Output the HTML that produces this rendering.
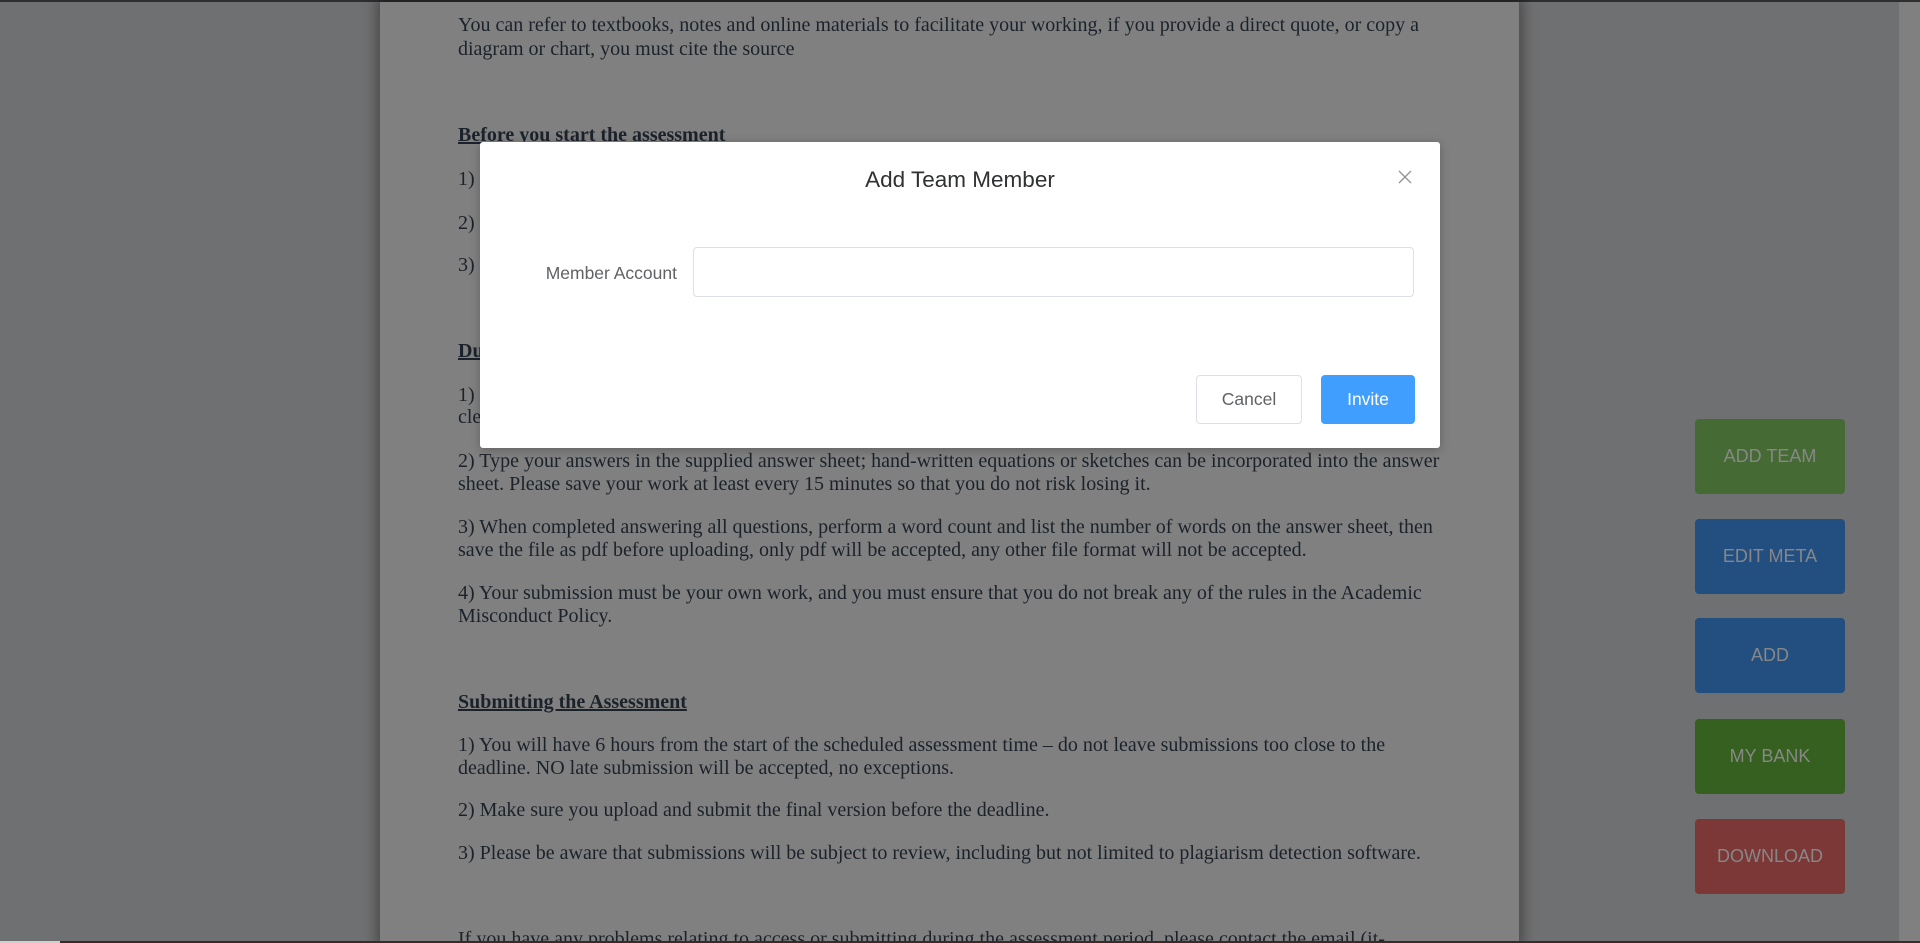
<!DOCTYPE html>
<html><head><meta charset="utf-8"><style>
*{margin:0;padding:0;box-sizing:border-box}
html,body{width:1920px;height:943px;overflow:hidden}
body{background:#6f7071;position:relative;font-family:"Liberation Serif",serif}
#top{position:absolute;left:0;top:0;width:1920px;height:2px;background:#2e2e2e}
#paper{position:absolute;left:380px;top:2px;width:1139px;height:941px;background:#808080;box-shadow:0 0 12px 4px rgba(0,0,0,.35)}
#track{position:absolute;left:1899px;top:2px;width:21px;height:941px;background:#808080}
.l{position:absolute;left:458px;font-size:20px;line-height:23px;color:#1b222a;white-space:nowrap;margin-top:2px}
.h{font-weight:bold;text-decoration:underline}
#bot{position:absolute;left:0;top:941px;width:1920px;height:2px;background:#3a2a2a}
#bot2{position:absolute;left:0;top:941px;width:60px;height:2px;background:#d0d0d0}
.btn{position:absolute;left:1695px;width:150px;height:75px;border-radius:4px;color:#878787;font:18px/75px "Liberation Sans",sans-serif;text-align:center}
#modal{position:absolute;left:480px;top:142px;width:960px;height:306px;background:#fff;border-radius:3px;box-shadow:0 2px 10px rgba(0,0,0,.25);font-family:"Liberation Sans",sans-serif}
</style></head><body>
<div id="top"></div>
<div id="paper"></div>
<div id="track"></div>
<div class="l" style="top:12px">You can refer to textbooks, notes and online materials to facilitate your working, if you provide a direct quote, or copy a</div>
<div class="l" style="top:36px">diagram or chart, you must cite the source</div>
<div class="l h" style="top:122px">Before you start the assessment</div>
<div class="l" style="top:166px">1)</div>
<div class="l" style="top:210px">2)</div>
<div class="l" style="top:252px">3)</div>
<div class="l h" style="top:338px">During the assessment</div>
<div class="l" style="top:382px">1)</div>
<div class="l" style="top:404px">clearly</div>
<div class="l" style="top:448px">2) Type your answers in the supplied answer sheet; hand-written equations or sketches can be incorporated into the answer</div>
<div class="l" style="top:471px">sheet. Please save your work at least every 15 minutes so that you do not risk losing it.</div>
<div class="l" style="top:514px">3) When completed answering all questions, perform a word count and list the number of words on the answer sheet, then</div>
<div class="l" style="top:537px">save the file as pdf before uploading, only pdf will be accepted, any other file format will not be accepted.</div>
<div class="l" style="top:580px">4) Your submission must be your own work, and you must ensure that you do not break any of the rules in the Academic</div>
<div class="l" style="top:603px">Misconduct Policy.</div>
<div class="l h" style="top:689px">Submitting the Assessment</div>
<div class="l" style="top:732px">1) You will have 6 hours from the start of the scheduled assessment time – do not leave submissions too close to the</div>
<div class="l" style="top:755px">deadline. NO late submission will be accepted, no exceptions.</div>
<div class="l" style="top:797px">2) Make sure you upload and submit the final version before the deadline.</div>
<div class="l" style="top:840px">3) Please be aware that submissions will be subject to review, including but not limited to plagiarism detection software.</div>
<div class="l" style="top:926px">If you have any problems relating to access or submitting during the assessment period, please contact the email (it-</div>
<div id="bot"></div><div id="bot2"></div>
<div class="btn" style="top:419px;background:#466a33">ADD TEAM</div>
<div class="btn" style="top:519px;background:#224f80">EDIT META</div>
<div class="btn" style="top:618px;background:#224f80">ADD</div>
<div class="btn" style="top:719px;background:#36601f">MY BANK</div>
<div class="btn" style="top:819px;background:#7c3737">DOWNLOAD</div>
<div id="modal">
  <div style="position:absolute;left:0;width:960px;top:24px;text-align:center;font-size:22.5px;color:#303133;line-height:28px">Add Team Member</div>
  <svg style="position:absolute;left:918px;top:28px" width="14" height="14" viewBox="0 0 14 14"><path d="M1 1L13 13M13 1L1 13" stroke="#909399" stroke-width="1.3"/></svg>
  <div style="position:absolute;left:0;width:197px;top:119px;text-align:right;font-size:17.5px;color:#606266;line-height:24px">Member Account</div>
  <div style="position:absolute;left:213px;top:105px;width:721px;height:50px;border:1px solid #dcdfe6;border-radius:4px"></div>
  <div style="position:absolute;left:716px;top:233px;width:106px;height:49px;border:1px solid #dcdfe6;border-radius:4px;text-align:center;line-height:47px;font-size:17.5px;color:#606266">Cancel</div>
  <div style="position:absolute;left:841px;top:233px;width:94px;height:49px;background:#409eff;border-radius:4px;text-align:center;line-height:49px;font-size:17.5px;color:#fff">Invite</div>
</div>
</body></html>
